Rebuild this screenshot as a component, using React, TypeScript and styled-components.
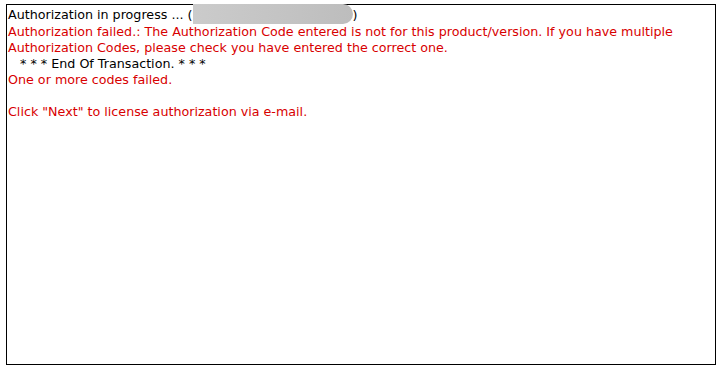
import React from 'react';
import styled, { createGlobalStyle } from 'styled-components';

const Global = createGlobalStyle`
  html, body {
    margin: 0;
    padding: 0;
    background: #ffffff;
  }
  body {
    font-family: "DejaVu Sans", Verdana, sans-serif;
  }
`;

const Page = styled.div`
  padding: 4px 6px 4px 6px;
`;

const LogBox = styled.div`
  box-sizing: border-box;
  width: 710px;
  height: 361px;
  border: 1px solid #000000;
  padding: 2px 1px;
  font-size: 12.7px;
  line-height: 16px;
  white-space: pre-wrap;
`;

const Line = styled.div<{ $error?: boolean }>`
  color: ${(p) => (p.$error ? '#d80000' : '#000000')};
  min-height: 16px;
`;

const Redacted = styled.span`
  display: inline-block;
  vertical-align: top;
  margin-top: -3px;
  width: 160px;
  height: 20px;
  border-radius: 0 10px 10px 0;
  background: linear-gradient(90deg, #cbcbcb 0%, #c3c3c3 60%, #bdbdbd 100%);
`;

export default function App() {
  return (
    <>
      <Global />
      <Page>
        <LogBox>
          <Line>
            Authorization in progress ... (<Redacted />)
          </Line>
          <Line $error>
            Authorization failed.: The Authorization Code entered is not for this product/version. If you have multiple
            Authorization Codes, please check you have entered the correct one.
          </Line>
          <Line>{'   * * * End Of Transaction. * * *'}</Line>
          <Line $error>One or more codes failed.</Line>
          <Line />
          <Line $error>Click "Next" to license authorization via e-mail.</Line>
        </LogBox>
      </Page>
    </>
  );
}
